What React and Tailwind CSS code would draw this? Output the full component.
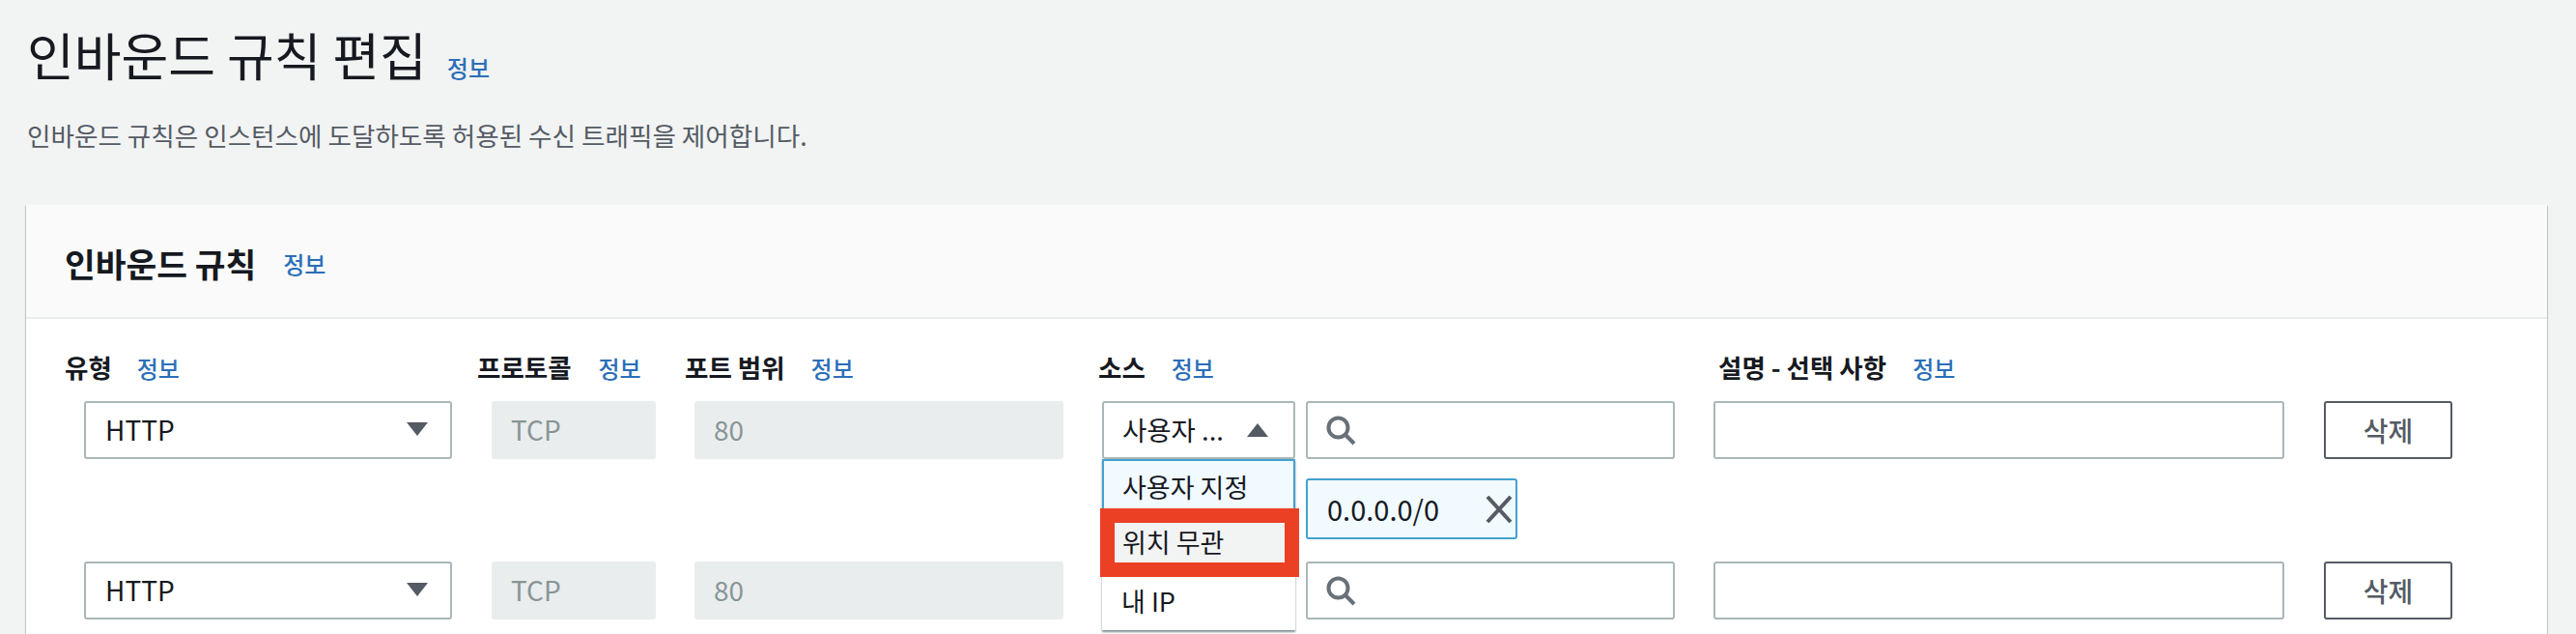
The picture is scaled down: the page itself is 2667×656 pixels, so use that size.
import React from 'react';

const Info = ({ className = '' }) => (
    <span className={`text-[#2b6fb8] text-[24px] font-medium leading-none ${className}`}>정보</span>
);

const Caret = ({ up }) => (
    <svg width="24" height="16" viewBox="0 0 24 16" className="shrink-0">
        <path d={up ? 'M12 1L23 15H1Z' : 'M1 1H23L12 15Z'} fill="#545b64" />
    </svg>
);

const Search = () => (
    <svg width="32" height="32" viewBox="0 0 32 32" fill="none" stroke="#687078" strokeWidth="4" className="shrink-0">
        <circle cx="13.5" cy="13.5" r="10" />
        <path d="M21 21L30 30" />
    </svg>
);

const Box = ({ className = '', children }) => (
    <div className={`h-[60px] flex items-center rounded-[3px] ${className}`}>{children}</div>
);

const Input = ({ className = '', children }) => (
    <Box className={`bg-white border-2 border-[#aab7b8] ${className}`}>{children}</Box>
);

const Disabled = ({ className = '', text }) => (
    <Box className={`bg-[#eaeded] text-[#879596] text-[28px] px-5 pb-[2px] ${className}`}>{text}</Box>
);

const Row = ({ open }) => (
    <div className="flex items-start ml-5">
        <Input className="w-[381px] pl-5 pr-[22px] pb-[2px] justify-between text-[28px] text-[#16191f]">
            HTTP
            <Caret />
        </Input>
        <Disabled className="w-[170px] ml-[41px]" text="TCP" />
        <Disabled className="w-[382px] ml-10" text="80" />
        <div className="relative w-[200px] ml-10">
            {/* the open menu covers the select below it, so only the open one has a label */}
            <Input className="w-full pl-[19px] pr-[25px] justify-between text-[27.5px] text-[#16191f]">
                {open && '사용자 ...'}
                {open && <Caret up />}
            </Input>
            {open && (
                <div className="absolute top-[60px] left-0 z-10 w-[200px] h-[177px] bg-white shadow-[0_2px_2px_rgba(0,28,36,0.5)] text-[27px] text-[#16191f]">
                    <div className="h-[57px] pl-[19px] flex items-center bg-[#f1faff] border-2 border-b-0 border-[#44a1cf]">사용자 지정</div>
                    <div className="absolute -left-[2px] top-[51px] w-[206px] h-[71px] border-[15px] border-[#ec4024] bg-[#f2f3f3] flex items-center pl-[8px]">
                        위치 무관
                    </div>
                    <div className="absolute left-0 top-[122px] h-[50px] pl-5 flex items-center">내 IP</div>
                </div>
            )}
        </div>
        <div className="w-[382px] ml-[11px]">
            <Input className="w-full pl-[18px]">
                <Search />
            </Input>
            {open && (
                <div className="mt-5 w-[219px] h-[63px] pl-5 pr-[3px] flex items-center justify-between bg-[#f1faff] border-2 border-[#44a1cf] rounded-[3px] text-[29px] text-[#16191f]">
                    0.0.0.0/0
                    <svg width="28" height="28" viewBox="0 0 28 28" fill="none" stroke="#545b64" strokeWidth="4" className="shrink-0">
                        <path d="M2 1L26 27M26 1L2 27" />
                    </svg>
                </div>
            )}
        </div>
        <Input className="w-[591px] ml-10" />
        <Box className="w-[133px] ml-[41px] justify-center bg-white border-2 border-[#545b64] text-[#545b64] text-[28px] font-medium">
            삭제
        </Box>
    </div>
);

const Label = ({ className = '', text, gap }) => (
    <div className={`flex items-center shrink-0 ${className}`}>
        <span className={`text-[26.5px] font-bold text-[#16191f] leading-none ${gap}`}>{text}</span>
        <Info />
    </div>
);

export default function App() {
    return (
        <div
            className="h-[656px] overflow-hidden bg-[#f2f3f3] pl-[27px] pr-[30px]"
            style={{ fontFamily: '"Noto Sans CJK KR", "Noto Sans", sans-serif' }}
        >
            <div className="flex items-end pt-[26px] h-[83px]">
                <h1 className="text-[53px] font-normal text-[#16191f] leading-none pl-[1px]">인바운드 규칙 편집</h1>
                <Info className="ml-[21px] mb-[1px]" />
            </div>
            <p className="mt-[41px] text-[26.6px] leading-8 text-[#545b64] pl-[1px]">
                인바운드 규칙은 인스턴스에 도달하도록 허용된 수신 트래픽을 제어합니다.
            </p>
            <div className="mt-[56px] h-[500px] bg-white shadow-[0_1px_1px_0_rgba(0,28,36,0.3),1px_1px_1px_0_rgba(0,28,36,0.15),-1px_1px_1px_0_rgba(0,28,36,0.15)]">
                <div className="h-[118px] px-10 pt-[5px] flex items-center bg-[#fafafa] border-b-2 border-[#eaeded]">
                    <h2 className="text-[34.5px] font-bold text-[#16191f] leading-none">인바운드 규칙</h2>
                    <Info className="ml-[28px]" />
                </div>
                <div className="pt-[34px] pl-10">
                    <div className="flex h-[33px] mb-[18px]">
                        <Label className="w-[427px]" text="유형" gap="mr-[26px]" />
                        <Label className="w-[215px]" text="프로토콜" gap="mr-[28px]" />
                        <Label className="w-[428px]" text="포트 범위" gap="mr-[27px]" />
                        <Label className="w-[642px]" text="소스" gap="mr-[27px]" />
                        <Label text="설명 - 선택 사항" gap="mr-[27px]" />
                    </div>
                    <Row open />
                    <div className="h-[23px]" />
                    <Row />
                </div>
            </div>
        </div>
    );
}
